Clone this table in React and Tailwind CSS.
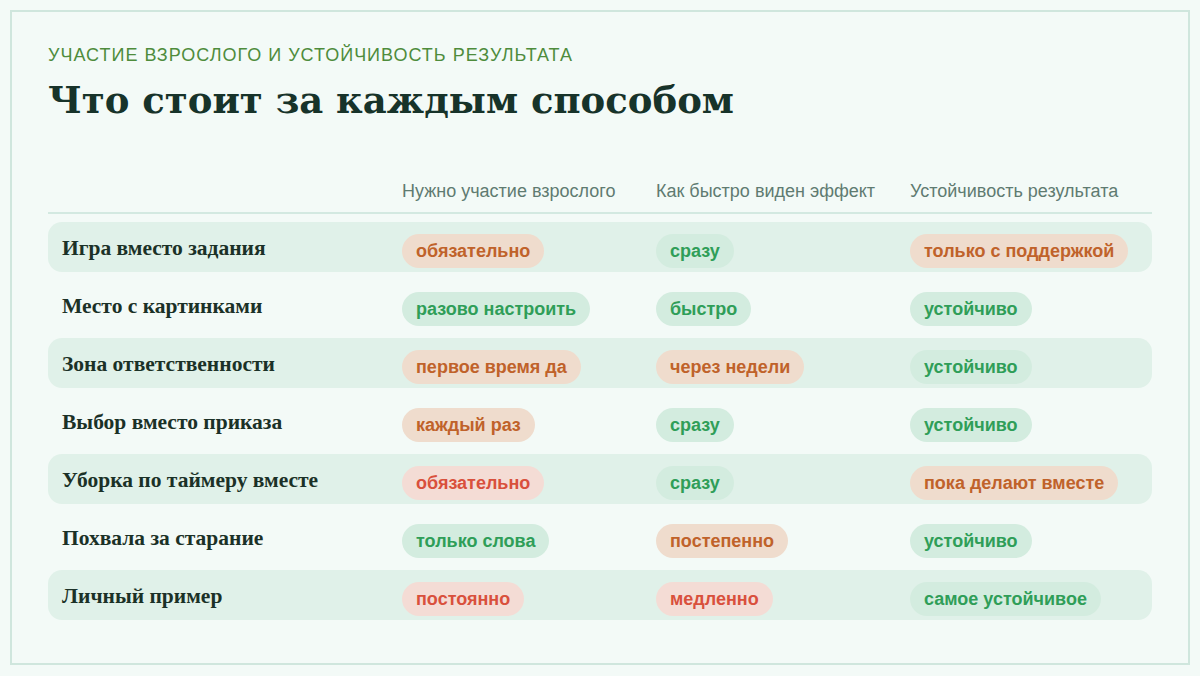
import React from "react";

const tones = {
  o: "bg-[#efdccd] text-[#c0622a]",
  g: "bg-[#d3ecdf] text-[#2f9e58]",
  r: "bg-[#f4dcd5] text-[#d9503c]",
};

const rows = [
  ["Игра вместо задания", ["обязательно", "o"], ["сразу", "g"], ["только с поддержкой", "o"]],
  ["Место с картинками", ["разово настроить", "g"], ["быстро", "g"], ["устойчиво", "g"]],
  ["Зона ответственности", ["первое время да", "o"], ["через недели", "o"], ["устойчиво", "g"]],
  ["Выбор вместо приказа", ["каждый раз", "o"], ["сразу", "g"], ["устойчиво", "g"]],
  ["Уборка по таймеру вместе", ["обязательно", "r"], ["сразу", "g"], ["пока делают вместе", "o"]],
  ["Похвала за старание", ["только слова", "g"], ["постепенно", "o"], ["устойчиво", "g"]],
  ["Личный пример", ["постоянно", "r"], ["медленно", "r"], ["самое устойчивое", "g"]],
];

const sans = { fontFamily: '"Liberation Sans", Arial, sans-serif' };
const serifTitle = { fontFamily: '"DejaVu Serif", Georgia, serif' };
const serif = { fontFamily: '"Liberation Serif", Georgia, serif' };

function Pill({ text, tone }) {
  return (
    <div className="pt-[8px]">
      <span
        className={`inline-flex h-[34px] items-center rounded-full px-[14px] text-[18px] font-bold ${tones[tone]}`}
        style={sans}
      >
        {text}
      </span>
    </div>
  );
}

export default function App() {
  return (
    <div className="h-[676px] w-[1200px] bg-[#f3faf7] p-[10px]">
      <div className="h-[655px] border-2 border-[#cfe6dd] bg-[#f3faf7] px-[36px] pt-[32px]">
        <div className="text-[18px] uppercase leading-[22px] tracking-[1px] text-[#4e8c3c]" style={sans}>
          Участие взрослого и устойчивость результата
        </div>
        <h1 className="mt-[12px] text-[37px] font-bold leading-[44px] text-[#17332a]" style={serifTitle}>
          Что стоит за каждым способом
        </h1>
        <div className="mt-[58px]">
          <div
            className="grid grid-cols-[354px_254px_254px_1fr] border-b-2 border-[#d3e9e1] pb-[10px] text-[18px] leading-[22px] text-[#5f7b71]"
            style={sans}
          >
            <div />
            <div>Нужно участие взрослого</div>
            <div>Как быстро виден эффект</div>
            <div>Устойчивость результата</div>
          </div>
          <div className="mt-[8px] flex flex-col gap-[8px]">
            {rows.map((r, i) => (
              <div
                key={i}
                className={`grid h-[50px] grid-cols-[354px_254px_254px_1fr] items-center rounded-[14px] ${
                  i % 2 === 0 ? "bg-[#e0f1e9]" : ""
                }`}
              >
                <div className="pl-[14px] pt-[2px] text-[21.5px] font-bold text-[#1b3127]" style={serif}>
                  {r[0]}
                </div>
                <Pill text={r[1][0]} tone={r[1][1]} />
                <Pill text={r[2][0]} tone={r[2][1]} />
                <Pill text={r[3][0]} tone={r[3][1]} />
              </div>
            ))}
          </div>
        </div>
      </div>
    </div>
  );
}
